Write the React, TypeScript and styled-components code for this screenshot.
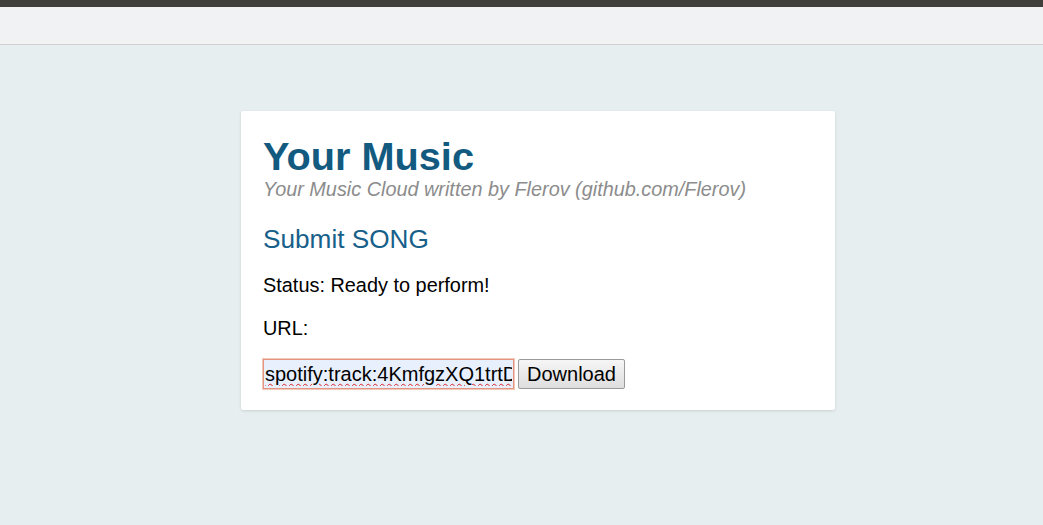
import styled, { createGlobalStyle } from 'styled-components'

const GlobalStyle = createGlobalStyle`
  html, body {
    margin: 0;
    padding: 0;
    height: 100%;
    background: #e6eef0;
    font-family: "Liberation Sans", Arial, sans-serif;
  }
`

const Page = styled.div`
  min-height: 525px;
  display: flex;
  flex-direction: column;
`

const TopStrip = styled.div`
  height: 7px;
  background: #413f3b;
`

const BrowserBar = styled.div`
  height: 37px;
  background: #f1f2f3;
  border-bottom: 1px solid #cfcfcf;
`

const Main = styled.div`
  display: flex;
  justify-content: center;
  padding-top: 66px;
`

const Card = styled.div`
  width: 594px;
  margin-left: 33px;
  box-sizing: border-box;
  background: #ffffff;
  padding: 23px 22px 21px;
  border-radius: 2px;
  box-shadow: 0 1px 3px rgba(0, 0, 0, 0.12);
`

const Title = styled.h1`
  margin: 0;
  font-size: 39.7px;
  line-height: 44px;
  font-weight: bold;
  color: #135a80;
`

const Subtitle = styled.div`
  font-size: 19.85px;
  line-height: 22px;
  font-style: italic;
  color: #8c8c8c;
`

const Heading = styled.h2`
  margin: 24px 0 0;
  font-size: 26.2px;
  line-height: 30px;
  font-weight: normal;
  color: #17608a;
`

const Line = styled.p<{ $gap: number }>`
  margin: ${(p) => p.$gap}px 0 0;
  font-size: 19.9px;
  line-height: 26px;
  color: #000;
`

const Form = styled.div`
  display: flex;
  align-items: flex-start;
  gap: 4px;
  margin-top: 18px;
`

const UrlInput = styled.input`
  width: 251px;
  height: 30px;
  box-sizing: border-box;
  padding: 0 1px;
  border: 1px solid #e3957f;
  box-shadow: 0 0 0 1px #f3c8ba;
  background: #e8f0fe;
  font-family: "Liberation Sans", Arial, sans-serif;
  font-size: 20px;
  color: #000;
  outline: none;
  text-decoration: underline wavy #dd2222;
  text-decoration-thickness: 1px;
  text-underline-offset: 2px;
`

const Button = styled.button`
  height: 30px;
  padding: 0 8px;
  border: 1px solid #9a9a9a;
  border-radius: 2px;
  background: linear-gradient(#f6f6f6, #dedede);
  font-family: "Liberation Sans", Arial, sans-serif;
  font-size: 20px;
  color: #000;
`

export default function App() {
  return (
    <Page>
      <GlobalStyle />
      <TopStrip />
      <BrowserBar />
      <Main>
        <Card>
          <Title>Your Music</Title>
          <Subtitle>Your Music Cloud written by Flerov (github.com/Flerov)</Subtitle>
          <Heading>Submit SONG</Heading>
          <Line $gap={18}>Status: Ready to perform!</Line>
          <Line $gap={17}>URL:</Line>
          <Form>
            <UrlInput defaultValue="spotify:track:4KmfgzXQ1trtDtt" spellCheck />
            <Button>Download</Button>
          </Form>
        </Card>
      </Main>
    </Page>
  )
}
